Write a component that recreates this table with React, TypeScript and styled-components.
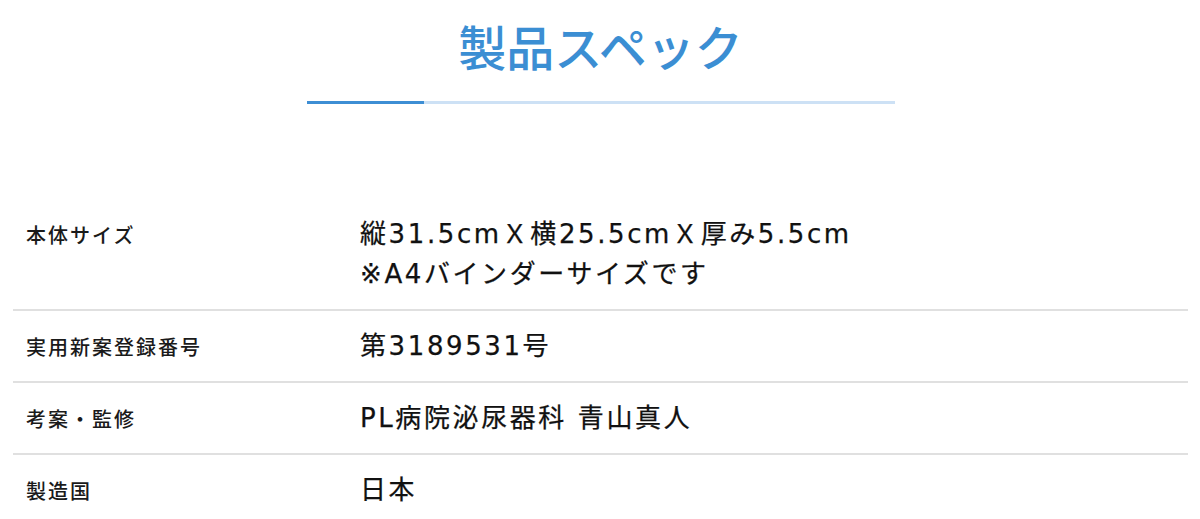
import React from "react";
import styled, { createGlobalStyle } from "styled-components";

const GlobalStyle = createGlobalStyle`
  html, body {
    margin: 0;
    padding: 0;
    background: #ffffff;
  }
  body {
    font-family: "Noto Sans CJK JP", "Noto Sans", sans-serif;
    color: #1a1a1a;
  }
`;

const Section = styled.section`
  width: 1200px;
  padding: 21px 12px 0 13px;
  box-sizing: border-box;
`;

const Heading = styled.div`
  display: flex;
  flex-direction: column;
  align-items: center;
`;

const Title = styled.h2`
  margin: 0;
  font-size: 48px;
  line-height: 48px;
  font-weight: 500;
  color: #3b8ed3;
`;

const TitleBar = styled.div`
  width: 588px;
  height: 3px;
  margin-top: 32px;
  background: #cde1f5;
  display: flex;
`;

const TitleBarFill = styled.div<{ $ratio: number }>`
  width: ${(p) => p.$ratio * 100}%;
  background: #3d8ed4;
`;

const SpecTable = styled.div`
  margin-top: 95px;
  display: flex;
  flex-direction: column;
`;

const Row = styled.div`
  display: grid;
  grid-template-columns: 334px 1fr;
  border-bottom: 2px solid #e0e0e0;

  &:last-child {
    border-bottom: none;
  }
`;

const Label = styled.div`
  padding: 16px 13px 14px;
  font-size: 20px;
  line-height: 40px;
  letter-spacing: 2px;
  font-weight: 500;
  color: #1a1a1a;
`;

const Value = styled.div`
  padding: 15px 13px;
  font-family: "DejaVu Sans", "Noto Sans CJK JP", sans-serif;
  font-size: 26px;
  line-height: 40px;
  letter-spacing: 2.6px;
  font-weight: 400;
  color: #111;
  -webkit-text-stroke: 0.25px #111;
`;

const specs: { label: string; value: string[] }[] = [
  {
    label: "本体サイズ",
    value: ["縦31.5cmＸ横25.5cmＸ厚み5.5cm", "※A4バインダーサイズです"],
  },
  { label: "実用新案登録番号", value: ["第3189531号"] },
  { label: "考案・監修", value: ["PL病院泌尿器科 青山真人"] },
  { label: "製造国", value: ["日本"] },
];

const App: React.FC = () => {
  return (
    <>
      <GlobalStyle />
      <Section>
        <Heading>
          <Title>製品スペック</Title>
          <TitleBar>
            <TitleBarFill $ratio={0.2} />
          </TitleBar>
        </Heading>
        <SpecTable>
          {specs.map((s) => (
            <Row key={s.label}>
              <Label>{s.label}</Label>
              <Value>
                {s.value.map((v, i) => (
                  <div key={i}>{v}</div>
                ))}
              </Value>
            </Row>
          ))}
        </SpecTable>
      </Section>
    </>
  );
};

export default App;
